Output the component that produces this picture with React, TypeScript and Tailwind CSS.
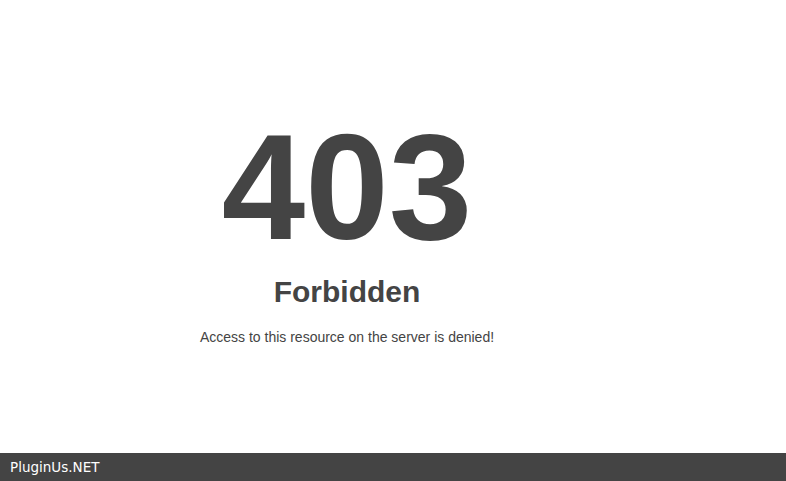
export default function App() {
  return (
    <div className="flex h-[481px] flex-col bg-white font-['Liberation_Sans',Arial,sans-serif] text-[#444]">
      <main className="flex-1">
        <div className="w-[694px] pt-[112px] text-center">
          <h1 className="text-[150px] font-bold leading-none">403</h1>
          <h2 className="mt-[15px] text-[30px] font-bold leading-none">Forbidden</h2>
          <p className="mt-[23px] text-[14px] leading-none">Access to this resource on the server is denied!</p>
        </div>
      </main>
      <footer className="flex h-[28px] items-center bg-[#444] px-[10px] font-['DejaVu_Sans',Verdana,sans-serif] text-[13.5px] text-white">
        PluginUs.NET
      </footer>
    </div>
  );
}
